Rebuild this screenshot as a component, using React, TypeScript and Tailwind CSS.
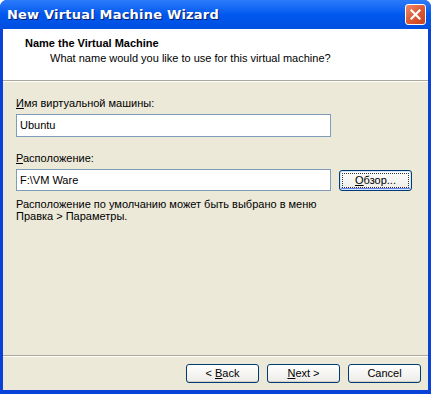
import React from "react";

const font = { fontFamily: '"Liberation Sans", Arial, sans-serif' };

const XpButton = ({ children, focused = false, className = "" }: { children: React.ReactNode; focused?: boolean; className?: string }) => (
  <div
    className={`h-[19px] rounded-[3px] border border-[#003C74] bg-gradient-to-b from-white to-[#ECEBE6] flex items-center justify-center text-[11px] text-black ${
      focused ? "shadow-[inset_0_0_0_1px_#CEE7FF,inset_0_-1px_0_1px_#6982EE]" : "shadow-[inset_0_-1px_0_0_#D6D0C5]"
    } ${className}`}
  >
    <span className={focused ? "outline outline-1 outline-dotted outline-[#333] px-[12px] leading-[13px]" : "leading-[13px]"}>{children}</span>
  </div>
);

export default function App() {
  return (
    <div className="w-[431px] h-[394px] flex flex-col bg-[#0842D8] rounded-t-[7px] overflow-hidden" style={font}>
      <div className="h-[29px] flex items-center justify-between pl-[7px] pr-[5px] bg-gradient-to-b from-[#2B7BFA] via-[#0058EE] to-[#004FE0]">
        <span className="text-white font-bold text-[13px] [text-shadow:1px_1px_0_#0A1E6E] tracking-[0.2px]" style={{ fontFamily: '"DejaVu Sans", sans-serif' }}>
          New Virtual Machine Wizard
        </span>
        <div className="w-[21px] h-[21px] rounded-[3px] border border-white bg-gradient-to-br from-[#EE8A6C] via-[#DC5A34] to-[#C84420] flex items-center justify-center">
          <svg width="11" height="11" viewBox="0 0 11 11">
            <path d="M1.5 1.5 L9.5 9.5 M9.5 1.5 L1.5 9.5" stroke="white" strokeWidth="2.2" strokeLinecap="square" />
          </svg>
        </div>
      </div>
      <div className="flex-1 flex flex-col ml-[3px] mr-[3px] mb-[4px] bg-[#ECE9D8] text-[11px] text-black">
        <div className="h-[51px] bg-white flex flex-col pt-[7px]">
          <div className="pl-[22px] font-bold leading-[14px]">Name the Virtual Machine</div>
          <div className="pl-[47px] mt-[1px] leading-[14px]">What name would you like to use for this virtual machine?</div>
        </div>
        <div className="h-px bg-[#ACA899]" />
        <div className="h-px bg-white" />
        <div className="flex-1 flex flex-col pl-[13px] pt-[15px]">
          <div className="leading-[13px]">
            <u>И</u>мя виртуальной машины:
          </div>
          <div className="mt-[4px] w-[315px] h-[23px] border border-[#7F9DB9] bg-white flex items-center pl-[3px] leading-[13px]">Ubuntu</div>
          <div className="mt-[15px] leading-[13px]">
            <u>Р</u>асположение:
          </div>
          <div className="mt-[4px] flex items-center">
            <div className="w-[315px] h-[22px] border border-[#7F9DB9] bg-white flex items-center pl-[3px] leading-[13px]">F:\VM Ware</div>
            <XpButton focused className="ml-[8px] w-[73px] h-[21px]">
              <u>О</u>бзор...
            </XpButton>
          </div>
          <div className="mt-[7px] leading-[12px]">
            Расположение по умолчанию может быть выбрано в меню
            <br />
            Правка &gt; Параметры.
          </div>
        </div>
        <div className="h-px bg-[#ACA899]" />
        <div className="h-px bg-white" />
        <div className="h-[33px] flex items-start justify-end gap-[8px] pr-[7px] pt-[7px]">
          <XpButton className="w-[73px]">
            &lt; <u>B</u>ack
          </XpButton>
          <XpButton className="w-[73px]">
            <u>N</u>ext &gt;
          </XpButton>
          <XpButton className="w-[73px]">Cancel</XpButton>
        </div>
      </div>
    </div>
  );
}
